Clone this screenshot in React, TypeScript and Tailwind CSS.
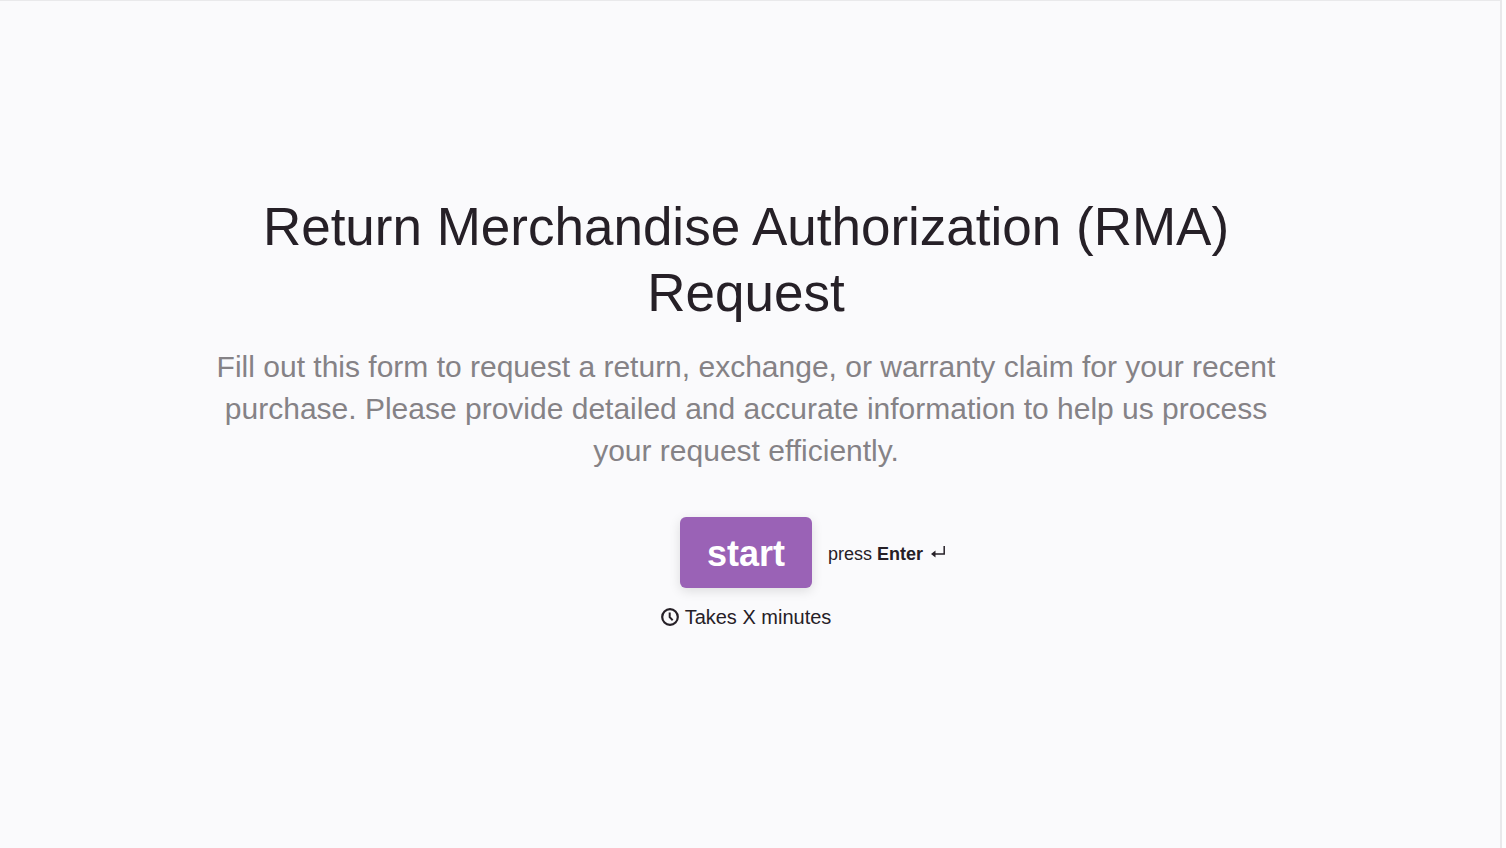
export default function App() {
  return (
    <main className="flex min-h-screen bg-[#fefefe] font-['Liberation_Sans',Arial,sans-serif] text-[#262027]">
      <div className="flex flex-1 flex-col items-center justify-center border-t border-[#e9e9eb] bg-[#fafafc] pr-52 pb-6 pl-50">
        <h1 className="max-w-[1080px] text-center text-[53px] leading-[66px]">
          Return Merchandise Authorization (RMA) Request
        </h1>
        <p className="mt-5 max-w-[1080px] text-center text-[30px] leading-[42px] text-[#858286]">
          Fill out this form to request a return, exchange, or warranty claim for your recent purchase. Please provide
          detailed and accurate information to help us process your request efficiently.
        </p>
        <div className="relative mt-[45px]">
          <button className="h-[71px] rounded-md bg-[#9a62b6] px-[27px] pt-1 text-[36px] font-bold text-white shadow-[0_3px_12px_rgba(0,0,0,0.12)]">
            start
          </button>
          <div className="absolute top-1/2 left-full ml-4 flex -translate-y-1/2 items-center gap-2 pt-1 text-[18px] whitespace-nowrap">
            <span>
              press <strong>Enter</strong>
            </span>
            <svg className="mb-1" width="14" height="13" viewBox="0 0 14 13" fill="none" stroke="currentColor" strokeWidth="1.5">
              <path d="M13.2 0.5v8H3" />
              <path d="M4.5 5v7L0 8.5z" fill="currentColor" stroke="none" />
            </svg>
          </div>
        </div>
        <div className="mt-[14px] flex items-center gap-[6px] text-[20px]">
          <svg width="18" height="18" viewBox="0 0 18 18" fill="none" stroke="currentColor" strokeWidth="2">
            <circle cx="9" cy="9" r="7.8" strokeWidth="2.2" />
            <path d="M8.7 4.5v4.7l3 3" />
          </svg>
          <span>Takes X minutes</span>
        </div>
      </div>
      <div className="w-[6px] border-l-2 border-[#e9e9eb]" />
    </main>
  );
}
